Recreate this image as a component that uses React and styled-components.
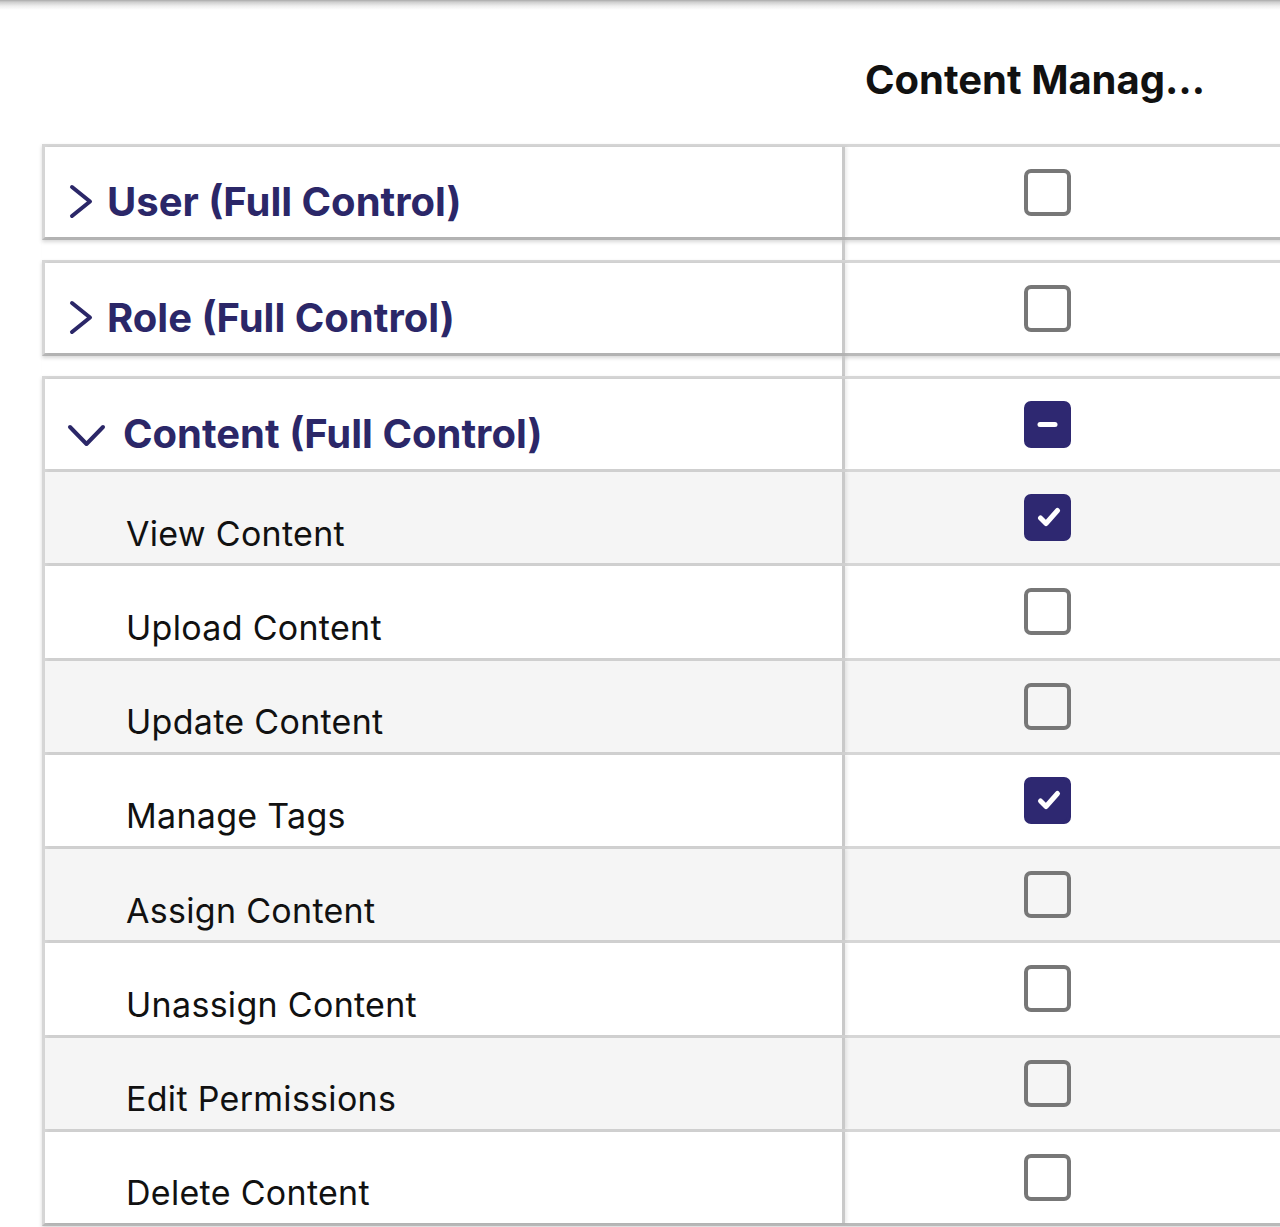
import React from 'react';
import styled, { createGlobalStyle } from 'styled-components';

const GlobalStyle = createGlobalStyle`
  body {
    margin: 0;
    background: #ffffff;
    overflow: hidden;
    font-family: Inter, 'Noto Sans', sans-serif;
  }
`;

const groups = [
  { name: 'User (Full Control)', state: 'off', open: false },
  { name: 'Role (Full Control)', state: 'off', open: false },
  {
    name: 'Content (Full Control)',
    state: 'mixed',
    open: true,
    items: [
      { name: 'View Content', state: 'on' },
      { name: 'Upload Content', state: 'off' },
      { name: 'Update Content', state: 'off' },
      { name: 'Manage Tags', state: 'on' },
      { name: 'Assign Content', state: 'off' },
      { name: 'Unassign Content', state: 'off' },
      { name: 'Edit Permissions', state: 'off' },
      { name: 'Delete Content', state: 'off' },
    ],
  },
];

export default function App() {
  return (
    <Page>
      <GlobalStyle />
      <TopShade />
      <HeaderRow>
        <HeaderLead />
        <ColumnTitle>Content Manag…</ColumnTitle>
      </HeaderRow>
      <Table>
        {groups.map((g, i) => (
          <React.Fragment key={g.name}>
            {i > 0 && <Spacer />}
            <Group>
              <Row>
                <NameCell $group>
                  <Chevron open={g.open} />
                  <GroupTitle>{g.name}</GroupTitle>
                </NameCell>
                <CheckCell>
                  <Checkbox state={g.state} />
                </CheckCell>
              </Row>
              {g.open &&
                g.items.map((item, k) => (
                  <SubRow key={item.name} $shaded={k % 2 === 0}>
                    <NameCell>
                      <ItemLabel>{item.name}</ItemLabel>
                    </NameCell>
                    <CheckCell>
                      <Checkbox state={item.state} />
                    </CheckCell>
                  </SubRow>
                ))}
            </Group>
          </React.Fragment>
        ))}
      </Table>
    </Page>
  );
}

function Chevron({ open }) {
  if (open) {
    return (
      <IconBox $w={56}>
        <svg width="56" height="40" viewBox="0 0 56 40">
          <polyline
            points="3,13 19.5,30 36,13"
            fill="none"
            stroke="#2b2768"
            strokeWidth="4"
            strokeLinecap="round"
            strokeLinejoin="round"
          />
        </svg>
      </IconBox>
    );
  }
  return (
    <IconBox $w={40}>
      <svg width="40" height="40" viewBox="0 0 40 40">
        <polyline
          points="5,5 23,19.5 5,34"
          fill="none"
          stroke="#2b2768"
          strokeWidth="4"
          strokeLinecap="round"
          strokeLinejoin="round"
        />
      </svg>
    </IconBox>
  );
}

function Checkbox({ state }) {
  return (
    <Box $filled={state !== 'off'}>
      {state === 'on' && (
        <svg width="39" height="39" viewBox="4 4 39 39">
          <polyline
            points="16.5,24 22,29.5 33.5,16.5"
            fill="none"
            stroke="#ffffff"
            strokeWidth="5"
            strokeLinecap="round"
            strokeLinejoin="round"
          />
        </svg>
      )}
      {state === 'mixed' && (
        <svg width="39" height="39" viewBox="4 4 39 39">
          <line
            x1="16"
            y1="23.5"
            x2="31"
            y2="23.5"
            stroke="#ffffff"
            strokeWidth="5"
            strokeLinecap="round"
          />
        </svg>
      )}
    </Box>
  );
}

const Page = styled.div`
  width: 1280px;
  min-height: 1227px;
  overflow: hidden;
`;

const TopShade = styled.div`
  height: 10px;
  background: linear-gradient(
    to bottom,
    #a9a9a9 0,
    #cdcdcd 2px,
    #eeeeee 6px,
    #ffffff 10px
  );
`;

const HeaderRow = styled.div`
  display: flex;
  height: 134px;
  padding-top: 4px;
  box-sizing: border-box;
  align-items: center;
`;

const HeaderLead = styled.div`
  width: 845px;
  flex-shrink: 0;
`;

const ColumnTitle = styled.div`
  padding-left: 20px;
  font-size: 40px;
  font-weight: 700;
  color: #111111;
  white-space: nowrap;
`;

const Table = styled.div`
  display: flex;
  flex-direction: column;
`;

const Spacer = styled.div`
  height: 20px;
  width: 803px;
  margin-left: 42px;
  box-sizing: border-box;
  border-right: 3px solid #c9c9c9;
  box-shadow: 2px 0 3px rgba(0, 0, 0, 0.08);
`;

const Group = styled.div`
  margin-left: 42px;
  width: 1500px;
  border: 3px solid #d6d6d6;
  border-right: none;
  border-bottom-color: #b9b9b9;
  box-shadow: 0 2px 4px rgba(0, 0, 0, 0.16);
  background: #ffffff;
`;

const Row = styled.div`
  display: flex;
  height: 90px;
`;

const SubRow = styled.div`
  display: flex;
  height: 91.25px;
  border-top: 3px solid #d6d6d6;
  background: ${(p) => (p.$shaded ? '#f5f5f5' : '#ffffff')};
`;

const NameCell = styled.div`
  width: 800px;
  flex-shrink: 0;
  box-sizing: border-box;
  display: flex;
  align-items: center;
  padding-left: ${(p) => (p.$group ? '22px' : '81px')};
  padding-top: ${(p) => (p.$group ? '19px' : '31px')};
  border-right: 3px solid #c9c9c9;
  box-shadow: 2px 0 3px rgba(0, 0, 0, 0.08);
`;

const CheckCell = styled.div`
  width: 404px;
  flex-shrink: 0;
  display: flex;
  align-items: center;
  justify-content: center;
`;

const IconBox = styled.span`
  display: flex;
  width: ${(p) => p.$w}px;
  height: 40px;
  flex-shrink: 0;
`;

const GroupTitle = styled.span`
  font-size: 40px;
  font-weight: 650;
  color: #2b2768;
  white-space: nowrap;
`;

const ItemLabel = styled.span`
  font-size: 34px;
  font-weight: 400;
  color: #111111;
  letter-spacing: 0.3px;
  white-space: nowrap;
`;

const Box = styled.span`
  display: flex;
  width: 47px;
  height: 47px;
  box-sizing: border-box;
  border: 4px solid ${(p) => (p.$filled ? '#2e2871' : '#777777')};
  border-radius: 7px;
  background: ${(p) => (p.$filled ? '#2e2871' : 'transparent')};
`;
